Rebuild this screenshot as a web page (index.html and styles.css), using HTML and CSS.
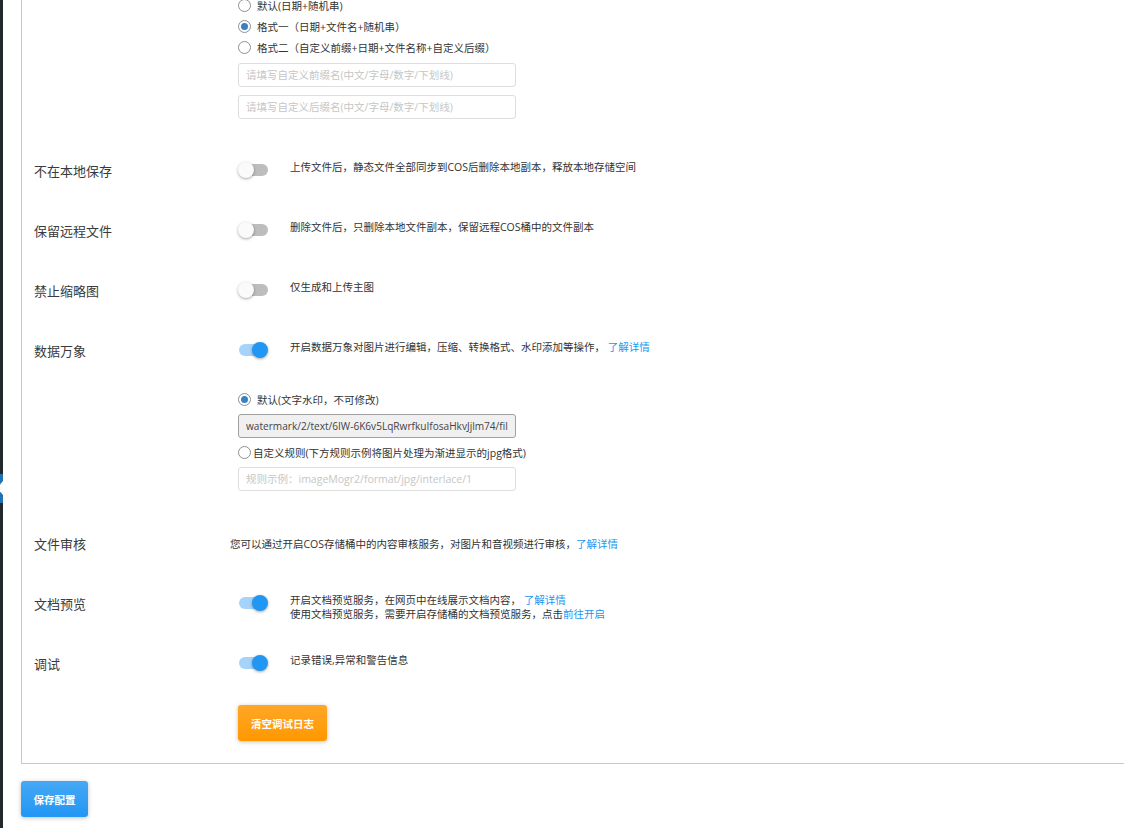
FILE: index.html
```html
<!DOCTYPE html>
<html lang="zh-CN">
<head>
<meta charset="utf-8">
<title>COS 设置</title>
<link rel="stylesheet" href="styles.css">
</head>
<body>
<div class="layout">
  <aside class="adminmenu">
    <div class="menu-current"></div>
  </aside>
  <main class="content">
    <div class="panel">
      <div class="row row-first">
        <div class="label"></div>
        <div class="value indent">
          <label class="radio"><span class="dot"></span><span>默认(日期+随机串)</span></label>
          <label class="radio"><span class="dot checked"></span><span>格式一（日期+文件名+随机串）</span></label>
          <label class="radio"><span class="dot"></span><span>格式二（自定义前缀+日期+文件名称+自定义后缀）</span></label>
          <input class="field field-first" type="text" placeholder="请填写自定义前缀名(中文/字母/数字/下划线)">
          <input class="field field-second" type="text" placeholder="请填写自定义后缀名(中文/字母/数字/下划线)">
        </div>
      </div>

      <div class="row">
        <div class="label">不在本地保存</div>
        <div class="value indent switch-line">
          <span class="switch"><span class="track"></span><span class="knob"></span></span>
          <div class="desc">上传文件后，静态文件全部同步到COS后删除本地副本，释放本地存储空间</div>
        </div>
      </div>

      <div class="row">
        <div class="label">保留远程文件</div>
        <div class="value indent switch-line">
          <span class="switch"><span class="track"></span><span class="knob"></span></span>
          <div class="desc">删除文件后，只删除本地文件副本，保留远程COS桶中的文件副本</div>
        </div>
      </div>

      <div class="row">
        <div class="label">禁止缩略图</div>
        <div class="value indent switch-line">
          <span class="switch"><span class="track"></span><span class="knob"></span></span>
          <div class="desc">仅生成和上传主图</div>
        </div>
      </div>

      <div class="row">
        <div class="label">数据万象</div>
        <div class="value indent">
          <div class="switch-line">
            <span class="switch on"><span class="track"></span><span class="knob"></span></span>
            <div class="desc">开启数据万象对图片进行编辑，压缩、转换格式、水印添加等操作， <a class="link" href="#">了解详情</a></div>
          </div>
          <div class="sub-block">
            <label class="radio"><span class="dot checked"></span><span>默认(文字水印，不可修改)</span></label>
            <input class="field field-disabled" type="text" value="watermark/2/text/6IW-6K6v5LqRwrfkuIfosaHkvJjlm74/fill/IzAwMDAwMA/fontsize/20/dissolve/50" disabled>
            <label class="radio radio-tight"><span class="dot"></span><span>自定义规则(下方规则示例将图片处理为渐进显示的jpg格式)</span></label>
            <input class="field" type="text" placeholder="规则示例：imageMogr2/format/jpg/interlace/1">
          </div>
        </div>
      </div>

      <div class="row">
        <div class="label">文件审核</div>
        <div class="value">
          <div class="desc desc-plain">您可以通过开启COS存储桶中的内容审核服务，对图片和音视频进行审核，<a class="link" href="#">了解详情</a></div>
        </div>
      </div>

      <div class="row">
        <div class="label">文档预览</div>
        <div class="value indent switch-line">
          <span class="switch on"><span class="track"></span><span class="knob"></span></span>
          <div class="desc">开启文档预览服务，在网页中在线展示文档内容， <a class="link" href="#">了解详情</a><br>使用文档预览服务，需要开启存储桶的文档预览服务，点击<a class="link" href="#">前往开启</a></div>
        </div>
      </div>

      <div class="row">
        <div class="label">调试</div>
        <div class="value indent switch-line">
          <span class="switch on"><span class="track"></span><span class="knob"></span></span>
          <div class="desc">记录错误,异常和警告信息</div>
        </div>
      </div>

      <div class="row row-actions">
        <div class="label"></div>
        <div class="value indent">
          <button class="btn btn-orange" type="button">清空调试日志</button>
        </div>
      </div>
    </div>
    <button class="btn btn-blue" type="button">保存配置</button>
  </main>
</div>
</body>
</html>
```

FILE: styles.css
```css
html, body {
  margin: 0;
  padding: 0;
  background: #fff;
  overflow: hidden;
}

body {
  font-family: "Open Sans", "Noto Sans CJK SC", sans-serif;
  color: #333;
}

.layout {
  display: flex;
  min-height: 100vh;
}

.adminmenu {
  width: 3px;
  flex: none;
  background: #23282d;
  padding-top: 474px;
  box-sizing: border-box;
}

.menu-current {
  height: 29px;
  background: #2271b1;
  position: relative;
}

.menu-current::after {
  content: "";
  position: absolute;
  right: 0;
  top: 7px;
  width: 0;
  height: 0;
  border-top: 7px solid transparent;
  border-bottom: 7px solid transparent;
  border-right: 6px solid #fff;
}

.content {
  flex: 1;
  min-width: 0;
  padding: 0 1px 0 18px;
}

.panel {
  margin-top: -5px;
  border-left: 1px solid #c8c8c8;
  border-bottom: 1px solid #c8c8c8;
  padding: 0 0 22px 12px;
}

.row {
  display: grid;
  grid-template-columns: 196px 1fr;
  padding-top: 20px;
  min-height: 60px;
  box-sizing: border-box;
}

.row-first {
  padding-top: 0;
  min-height: 0;
  padding-bottom: 22px;
}

.row-actions {
  padding-top: 11px;
  min-height: 0;
}

.label {
  font-size: 13px;
  line-height: 20px;
  color: #3a3a3a;
}

.value {
  min-width: 0;
}

.indent {
  padding-left: 8px;
}

.switch-line {
  display: flex;
  align-items: flex-start;
}

.switch {
  position: relative;
  width: 30px;
  height: 18px;
  flex: none;
}

.track {
  position: absolute;
  left: 2px;
  top: 3px;
  width: 28px;
  height: 12px;
  border-radius: 6px;
  background: #bdbdbd;
}

.knob {
  position: absolute;
  left: 0;
  top: 1px;
  width: 16px;
  height: 16px;
  border-radius: 50%;
  background: #fafafa;
  box-shadow: 0 1px 3px rgba(0, 0, 0, 0.35);
}

.switch.on .track {
  left: 1px;
  background: #a6d3f9;
}

.switch.on .knob {
  left: 14px;
  background: #2196f3;
}

.desc {
  font-size: 10.5px;
  line-height: 14px;
  margin-top: -1px;
  margin-left: 22px;
  color: #333;
}

.desc-plain {
  margin: 0;
  line-height: 20px;
}

.link {
  color: #2196f3;
  text-decoration: none;
}

.radio {
  display: flex;
  align-items: center;
  gap: 6px;
  height: 21px;
  font-size: 10.5px;
  color: #333;
}

.radio-tight {
  gap: 2px;
}

.dot {
  width: 13px;
  height: 13px;
  box-sizing: border-box;
  border: 1px solid #8c8f94;
  border-radius: 50%;
  display: flex;
  align-items: center;
  justify-content: center;
  flex: none;
  background: #fff;
}

.dot.checked::after {
  content: "";
  width: 7px;
  height: 7px;
  border-radius: 50%;
  background: #3582c4;
}

.field {
  display: block;
  width: 278px;
  height: 24px;
  box-sizing: border-box;
  margin: 4px 0 0;
  padding: 0 7px;
  border: 1px solid #dedede;
  border-radius: 3px;
  font-family: "Open Sans", "Noto Sans CJK SC", sans-serif;
  font-size: 10.5px;
  color: #333;
  background: #fff;
  outline: none;
}

.field::placeholder {
  color: #c6c6c6;
}

.field-first {
  margin-top: 5px;
}

.field-second {
  margin-top: 8px;
}

.field-disabled {
  background: #f0f0f0;
  border-color: #a0a0a0;
  color: #444;
  font-family: "Open Sans", "Noto Sans CJK SC", sans-serif;
  font-size: 10.1px;
}

.sub-block {
  margin-top: 30px;
  margin-bottom: 23px;
}

.sub-block .radio + .field,
.sub-block .field + .radio {
  margin-top: 4px;
}

.btn {
  display: block;
  height: 36px;
  border: none;
  border-radius: 3px;
  color: #fff;
  font-family: "Open Sans", "Noto Sans CJK SC", sans-serif;
  font-size: 10.5px;
  cursor: pointer;
  box-shadow: 0 1px 4px rgba(0, 0, 0, 0.25);
}

.btn-orange {
  width: 89px;
  font-weight: 600;
  background: linear-gradient(#ffa727, #ff9800);
}

.btn-blue {
  width: 67px;
  margin: 17px 0 0 0;
  font-weight: 700;
  background: linear-gradient(#45a8f5, #2196f3);
}
```
